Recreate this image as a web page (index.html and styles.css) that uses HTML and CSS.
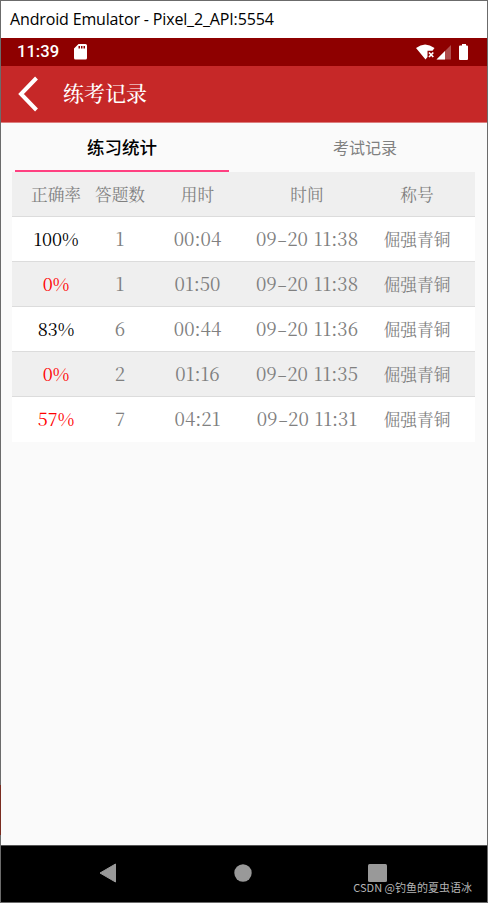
FILE: index.html
```
<!DOCTYPE html>
<html lang="zh-CN">
<head>
  <meta charset="UTF-8" />
  <meta name="viewport" content="width=device-width, initial-scale=1.0" />
  <title>练考记录</title>
  <link rel="stylesheet" href="styles.css">
</head>
<body>
  <div class="window">
    <div class="titlebar"><span class="window-title">Android Emulator - Pixel_2_API:5554</span></div>

    <div class="statusbar">
      <span class="clock">11:39</span>
      <svg class="sdcard" width="13" height="16" viewBox="0 0 13 16">
        <path fill="#fff" fill-rule="evenodd" d="M4.5 0H11.5Q13 0 13 1.5V14Q13 15.5 11.5 15.5H1.5Q0 15.5 0 14V4.5ZM4.5 2V4.500H6V2ZM7 2V4.500H8.500V2ZM9.500 2V4.500H11V2Z"/>
      </svg>
      <svg class="signals" width="54" height="17" viewBox="0 0 54 17">
        <path fill="#fff" d="M0 4Q9 -3 18.500 4L16.500 6.700H11.500V13L9.500 15.500Z"/>
        <path stroke="#fff" stroke-width="1.700" d="M13 8.500L17.300 13M17.300 8.500L13 13"/>
        <path fill="#fff" fill-opacity=".3" d="M35 1V15.500H20.500Z"/>
        <path fill="#fff" d="M29 7V15.500H20.500Z"/>
        <path fill="#fff" d="M46 0H50V1.500H51Q52 1.500 52 2.500V15Q52 16 51 16H44Q43 16 43 15V2.500Q43 1.500 44 1.500H46Z"/>
      </svg>
    </div>

    <header class="header">
      <svg class="back" width="20" height="36" viewBox="0 0 20 36">
        <path fill="none" stroke="#fff" stroke-width="4" d="M18.500 2L3 18L18.500 34"/>
      </svg>
      <h1>练考记录</h1>
    </header>

    <main class="content">
      <div class="tabs">
        <div class="tab active">练习统计</div>
        <div class="tab">考试记录</div>
      </div>

      <div class="table">
        <div class="row head"><span>正确率</span><span>答题数</span><span>用时</span><span>时间</span><span>称号</span></div>
        <div class="row"><span class="pass">100%</span><span>1</span><span>00:04</span><span>09<i class="dash">-</i>20 11:38</span><span class="rank">倔强青铜</span></div>
        <div class="row"><span class="fail">0%</span><span>1</span><span>01:50</span><span>09<i class="dash">-</i>20 11:38</span><span class="rank">倔强青铜</span></div>
        <div class="row"><span class="pass">83%</span><span>6</span><span>00:44</span><span>09<i class="dash">-</i>20 11:36</span><span class="rank">倔强青铜</span></div>
        <div class="row"><span class="fail">0%</span><span>2</span><span>01:16</span><span>09<i class="dash">-</i>20 11:35</span><span class="rank">倔强青铜</span></div>
        <div class="row"><span class="fail">57%</span><span>7</span><span>04:21</span><span>09<i class="dash">-</i>20 11:31</span><span class="rank">倔强青铜</span></div>
      </div>
    </main>

    <nav class="navbar">
      <svg width="18" height="20" viewBox="0 0 18 20"><path fill="#999" stroke="#999" stroke-linejoin="round" d="M1 10L16.500 1V19Z"/></svg>
      <svg width="18" height="18" viewBox="0 0 18 18"><circle cx="9" cy="9" r="8.700" fill="#999"/></svg>
      <svg width="19" height="18" viewBox="0 0 19 18"><rect width="19" height="18" rx="1.500" fill="#999"/></svg>
    </nav>
    <div class="watermark">CSDN @钓鱼的夏虫语冰</div>
    <div class="edge"></div>
  </div>
</body>
</html>
```
FILE: styles.css
```
* {
  box-sizing: border-box;
}
body {
  margin: 0;
}
.window {
  position: relative;
  width: 488px;
  height: 903px;
  border: 1px solid #6b6b6b;
  background: #fafafa;
  display: flex;
  flex-direction: column;
}
.titlebar {
  height: 37px;
  padding-left: 9px;
  background: #fff;
  color: #000;
  font: 16px/37px "Open Sans", "Noto Sans", sans-serif;
  letter-spacing: -0.15px;
}
.window-title {
  display: inline-block;
  white-space: nowrap;
}
.statusbar {
  height: 28px;
  padding: 0 17px 0 16px;
  background: #8e0000;
  color: #fff;
  display: flex;
  align-items: center;
}
.clock {
  width: 57px;
  font: 500 16.6px/28px Roboto, sans-serif;
}
.signals {
  margin-left: auto;
}
.header {
  height: 57px;
  padding-left: 17px;
  background: #c62828;
  border-bottom: 1px solid #dd7e7e;
  display: flex;
  align-items: center;
}
.header h1 {
  margin: 0 0 0 25px;
  padding-bottom: 3px;
  color: #fff;
  font: 500 21px/53px "Noto Serif CJK SC", "Noto Sans CJK SC", serif;
}
.content {
  flex: 1;
  padding: 0 12px 0 11px;
}
.tabs {
  height: 49px;
  padding: 0 3px;
  display: flex;
  gap: 29px;
}
.tab {
  width: 214px;
  flex: none;
  text-align: center;
  color: #808080;
  font: 16px/48px "Noto Sans CJK SC", sans-serif;
}
.tab.active {
  color: #000;
  font-size: 17.5px;
  font-weight: 500;
  line-height: 47px;
  border-bottom: 2px solid #ff4081;
}
.table {
  color: #808080;
  font: 18.6px/43px "Noto Serif CJK SC", "Liberation Serif", serif;
  font-variant-numeric: tabular-nums;
  font-kerning: none;
  word-spacing: 1px;
}
.row {
  height: 45px;
  padding: 0 12px;
  display: grid;
  grid-template-columns: 64px 64px 91px 128px 92px;
  text-align: center;
  white-space: nowrap;
  background: #fff;
  border-bottom: 1px solid #dcdcdc;
}
.row:nth-child(odd) {
  background: #efefef;
}
.row:last-child {
  border-bottom: none;
}
.head,
.rank {
  font-size: 16.7px;
  line-height: 44px;
}
.dash {
  display: inline-block;
  font-style: normal;
  transform: scaleX(1.6);
  margin: 0 2px;
}
.pass,
.fail {
  font-size: 18px;
}
.pass {
  color: #000;
}
.fail {
  color: #f00;
}
.navbar {
  height: 57px;
  padding: 0 100px 2px 98px;
  background: #000;
  border-top: 1px solid #555;
  display: flex;
  align-items: center;
  justify-content: space-between;
}
.watermark {
  position: absolute;
  right: 15px;
  bottom: 6px;
  color: #b5b5b5;
  font: 11px/18px "Noto Sans CJK SC", sans-serif;
  white-space: nowrap;
}
/* sliver of the desktop showing beside the window */
.edge {
  position: absolute;
  left: -1px;
  top: 784px;
  width: 1px;
  height: 50px;
  background: #7a2c20;
}
```
